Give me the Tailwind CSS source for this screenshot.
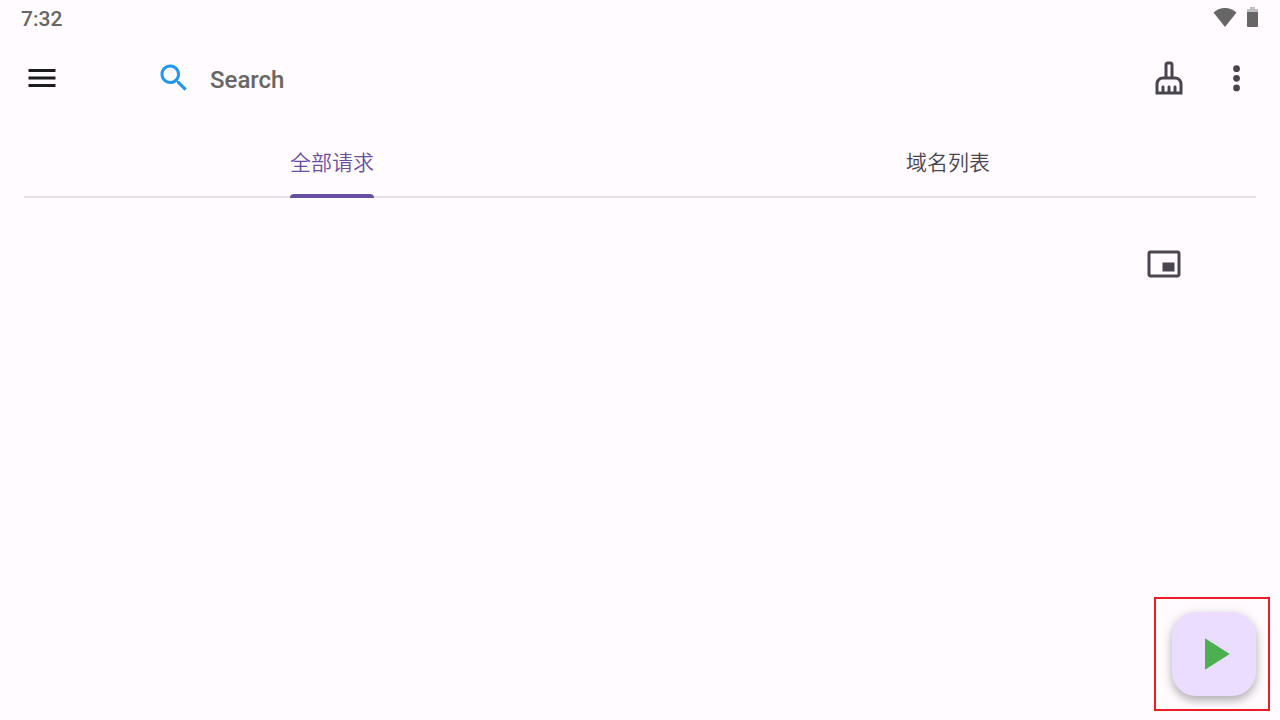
<!DOCTYPE html>
<html lang="zh-CN">
  <head>
    <meta charset="UTF-8" />
    <meta name="viewport" content="width=device-width, initial-scale=1.0" />
    <title>全部请求</title>
    <script src="https://cdn.jsdelivr.net/npm/@tailwindcss/browser@4"></script>
  </head>
  <body
    class="relative bg-[#fffbff] min-h-screen flex flex-col font-[Roboto,'Noto_Sans_CJK_SC',sans-serif]"
  >
    <!-- Status bar -->
    <div
      class="h-9 pl-[21px] pr-[19px] flex items-center justify-between text-[#666666]"
    >
      <span class="pt-0.5 text-[21px] leading-9 font-medium">7:32</span>
      <div class="flex items-center gap-2">
        <svg class="w-6 h-5" viewBox="0 0 24 20" fill="currentColor">
          <path d="M12 19 0.5 4.5C3.6 1.9 7.6 0 12 0s8.4 1.9 11.5 4.5z" />
        </svg>
        <svg class="w-4 h-6" viewBox="0 -2 16 24" fill="currentColor">
          <path fill="#c0bec0" d="M5 -1h5v2h3v4H2V1h3z" />
          <path d="M2 4h11v14q0 1-1 1H3q-1 0-1-1z" />
        </svg>
      </div>
    </div>

    <!-- App bar -->
    <header class="h-21 pl-6 pr-[25px] flex items-center">
      <button type="button" aria-label="Menu" class="text-[#1c1b1e]">
        <svg class="w-9 h-9" viewBox="0 0 24 24" fill="currentColor">
          <path d="M3 18h18v-2H3v2zm0-5h18v-2H3v2zm0-7v2h18V6H3z" />
        </svg>
      </button>

      <label for="search" class="ml-24 text-[#2196f3]" aria-label="Search">
        <svg class="w-9 h-9" viewBox="0 0 24 24" fill="currentColor">
          <path
            d="M15.5 14h-.79l-.28-.27C15.41 12.59 16 11.11 16 9.5 16 5.91 13.09 3 9.5 3S3 5.91 3 9.5 5.91 16 9.5 16c1.61 0 3.09-.59 4.23-1.57l.27.28v.79l5 4.99L20.49 19l-4.99-5zm-6 0C7.01 14 5 11.99 5 9.5S7.01 5 9.5 5 14 7.01 14 9.5 11.99 14 9.5 14z"
          />
        </svg>
      </label>
      <input
        id="search"
        type="text"
        placeholder="Search"
        class="flex-1 min-w-0 ml-[18px] mt-1 text-2xl font-medium text-[#1c1b1e] placeholder:text-[#666666] focus:outline-none"
      />

      <div class="flex items-center gap-8 text-[#49454e]">
        <button type="button" aria-label="Clear">
          <svg class="w-9 h-9" viewBox="0 0 24 24" fill="currentColor">
            <path
              d="M16 11h-1V3c0-1.1-.9-2-2-2h-2c-1.1 0-2 .9-2 2v8H8c-2.76 0-5 2.24-5 5v7h18v-7c0-2.76-2.24-5-5-5zM11 3h2v8h-2V3zm8 18h-2v-3c0-.55-.45-1-1-1s-1 .45-1 1v3h-2v-3c0-.55-.45-1-1-1s-1 .45-1 1v3H9v-3c0-.55-.45-1-1-1s-1 .45-1 1v3H5v-5c0-1.65 1.35-3 3-3h8c1.65 0 3 1.35 3 3v5z"
            />
          </svg>
        </button>
        <button type="button" aria-label="More">
          <svg class="w-9 h-9" viewBox="0 0 24 24" fill="currentColor">
            <circle cx="11.7" cy="5.75" r="2.25" />
            <circle cx="11.7" cy="12.2" r="2.25" />
            <circle cx="11.7" cy="18.65" r="2.25" />
          </svg>
        </button>
      </div>
    </header>

    <!-- Tabs -->
    <div
      role="tablist"
      class="mx-6 mt-2 h-[70px] grid grid-cols-2 justify-items-center border-b-2 border-[#e7e0eb] text-[21px] font-[350]"
    >
      <button
        type="button"
        role="tab"
        aria-selected="true"
        class="relative h-[70px] pt-0.5 text-[#6750a4]"
      >
        全部请求
        <span
          class="absolute inset-x-0 bottom-0 h-1 rounded-t bg-[#6750a4]"
        ></span>
      </button>
      <button
        type="button"
        role="tab"
        aria-selected="false"
        class="h-[70px] pt-0.5 text-[#49454e]"
      >
        域名列表
      </button>
    </div>

    <!-- Request list -->
    <main class="flex-1 pt-12 pr-[98px] flex justify-end items-start">
      <button
        type="button"
        aria-label="Picture in picture"
        class="text-[#49454e]"
      >
        <svg class="w-9 h-9" viewBox="0 0 24 24" fill="currentColor">
          <path
            d="M19 11h-8v6h8v-6zm4 8V4.98C23 3.88 22.1 3 21 3H3c-1.1 0-2 .88-2 1.98V19c0 1.1.9 2 2 2h18c1.1 0 2-.9 2-2zm-2 .02H3V4.97h18v14.05z"
          />
        </svg>
      </button>
    </main>

    <!-- Start button -->
    <div
      class="absolute right-2.5 bottom-[9px] border-2 border-[#ed1c24] pt-[13px] pb-[13px] pl-4 pr-3"
    >
      <button
        type="button"
        aria-label="Start"
        class="w-21 h-21 flex items-center justify-center rounded-3xl bg-[#eaddff] text-[#4caf50] shadow-[0_5px_8px_rgba(0,0,0,0.24),0_1px_14px_rgba(0,0,0,0.1)]"
      >
        <svg class="w-[54px] h-[54px]" viewBox="0 0 24 24" fill="currentColor">
          <path d="M8 5v14l11-7z" />
        </svg>
      </button>
    </div>
  </body>
</html>
